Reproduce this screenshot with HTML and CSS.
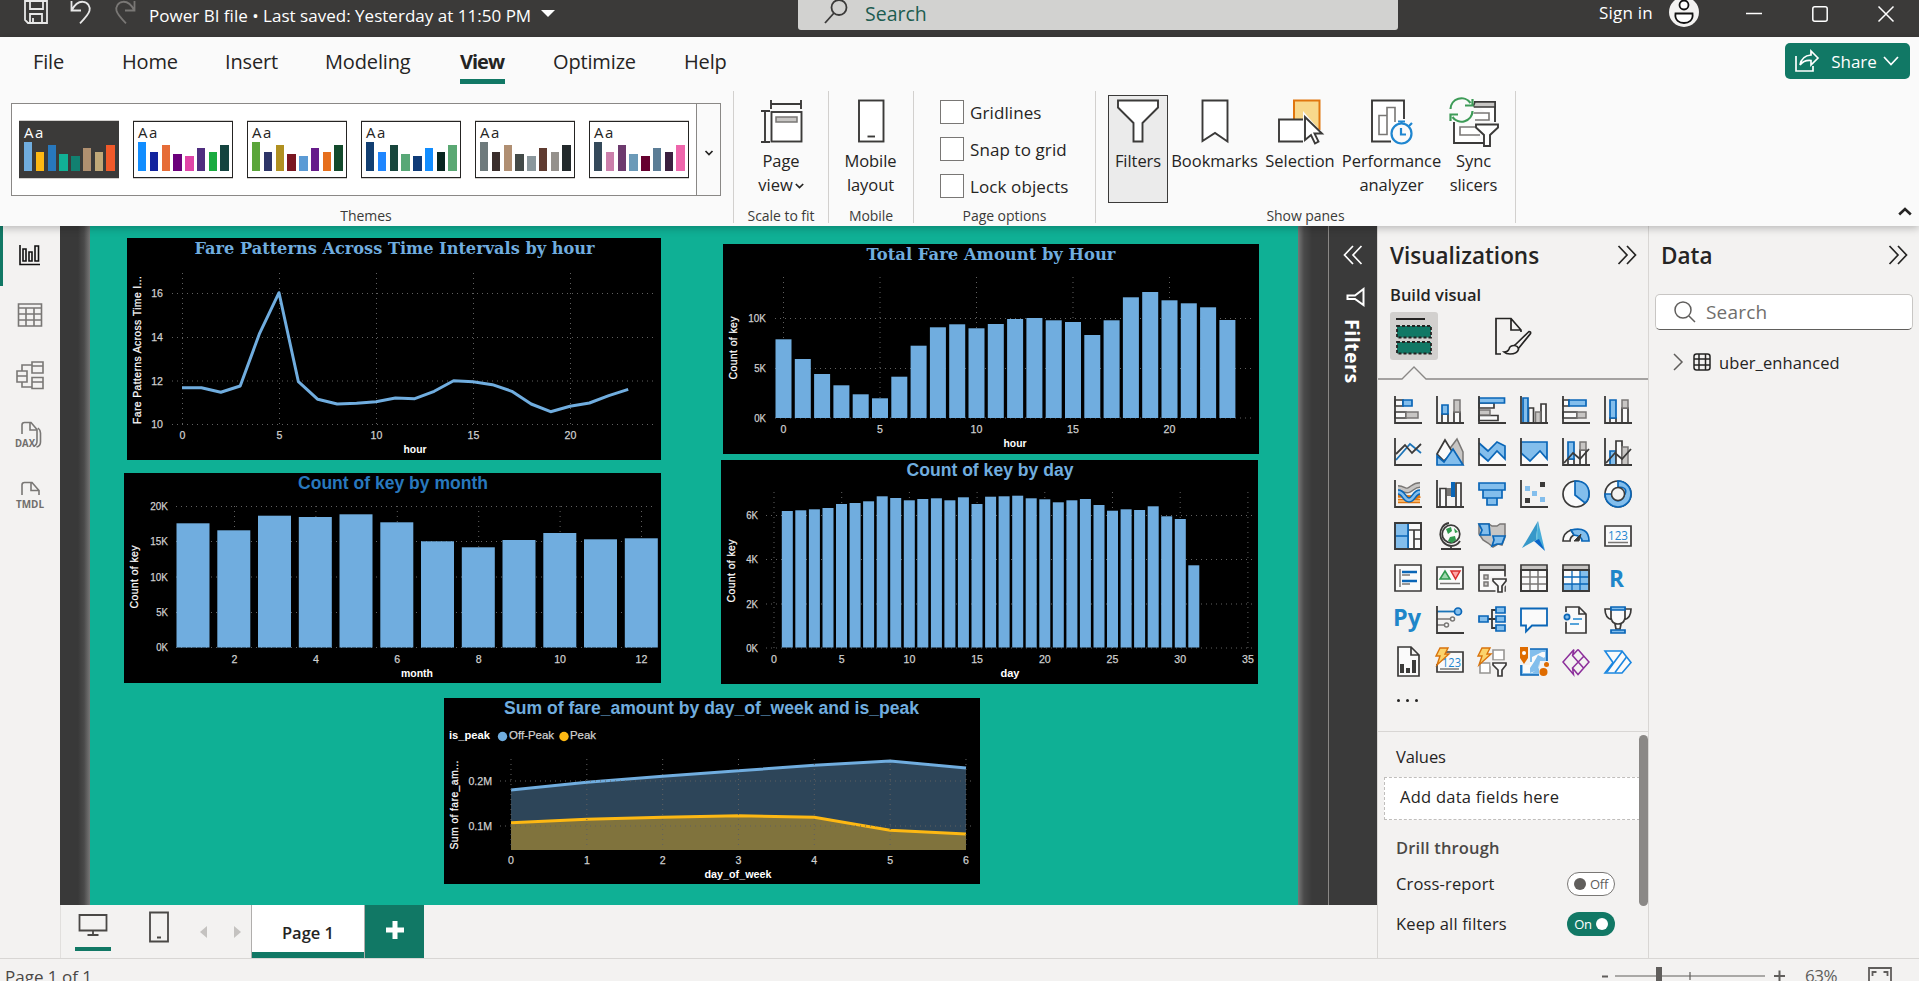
FILE: index.html
```html
<!DOCTYPE html>
<html lang="en">
<head>
<meta charset="utf-8">
<title>Power BI file</title>
<link rel="stylesheet" href="styles.css">
</head>
<body>
<div class="app">
  <header class="titlebar">
    <div class="tb-left">
      <svg class="ic-save" width="24" height="24" viewBox="0 0 24 24"><path d="M1 1h22v22H4l-3-3zM6 1v8h13V1M6 23v-9h12v9M9 23v-5"/></svg>
      <svg class="ic-undo" width="22" height="24" viewBox="0 0 22 24"><path d="M1.500 1v9.500h9.500M1.500 10.500C5 4 9 1.500 13 1.800c5 .4 7.500 5 6.500 9-.8 3-5 8-9.500 12.500"/></svg>
      <svg class="ic-redo" width="22" height="24" viewBox="0 0 22 24"><path d="M20.500 1v9.500H11M20.500 10.500C17 4 13 1.500 9 1.800c-5 .4-7.500 5-6.500 9 .8 3 5 8 9.500 12.500"/></svg>
      <span class="tb-name">Power BI file • Last saved: Yesterday at 11:50 PM</span>
      <svg class="ic-tri" width="14" height="7" viewBox="0 0 14 7"><path d="M0 0h14L7 7z"/></svg>
    </div>
    <div class="tb-search">
      <svg width="24" height="25" viewBox="0 0 24 25"><circle cx="15" cy="8.500" r="7.500"/><path d="M10 14L1 24"/></svg>
      <span>Search</span>
    </div>
    <div class="tb-right">
      <span class="signin">Sign in</span>
      <svg class="avatar" width="30" height="30" viewBox="0 0 30 30"><circle class="disc" cx="15" cy="15" r="15"/><circle cx="15" cy="8" r="4.500"/><path d="M6.500 16.500h17c1 7-4 9.500-8.500 9.500s-9.500-2.500-8.500-9.500z"/></svg>
      <svg class="win" width="16" height="16" viewBox="0 0 16 16"><path d="M0 7.500h16"/></svg>
      <svg class="win" width="16" height="16" viewBox="0 0 16 16"><rect x=".8" y=".8" width="14.400" height="14.400" rx="2"/></svg>
      <svg class="win" width="16" height="16" viewBox="0 0 16 16"><path d="M.5.5l15 15M15.500.5l-15 15"/></svg>
    </div>
  </header>

  <section class="ribbon">
    <nav class="tabs">
      <span class="tab t-file">File</span><span class="tab t-home">Home</span><span class="tab t-insert">Insert</span><span class="tab t-model">Modeling</span><span class="tab t-view">View</span><span class="tab t-opt">Optimize</span><span class="tab t-help">Help</span>
      <button class="share">
        <svg width="24" height="22" viewBox="0 0 24 22"><path d="M1 6v15h17v-5M23 8l-7-7v4C10 5.500 6 9 5 15c3-4 6-5 11-4.500V15z"/></svg>
        <span>Share</span>
        <svg width="16" height="10" viewBox="0 0 16 10"><path d="M1 1l7 7.500L15 1"/></svg>
      </button>
    </nav>
    <div class="groups">
      <div class="group g-themes">
        <div class="gallery"><div class="thumbs" id="thumbs"></div><div class="more"><svg width="8" height="6" viewBox="0 0 8 6"><path d="M.5 1L4 4.500 7.500 1"/></svg></div></div>
        <div class="glabel">Themes</div>
      </div>
      <div class="group g-scale">
        <div class="cmd">
          <svg width="44" height="44" viewBox="0 0 44 44"><g class="dk"><path d="M12 1v9M42 1v9M12 5h30M2 12h9M2 43h9M6 12v31"/><rect x="12.500" y="13" width="30" height="29.500" fill="#fff"/></g><rect x="17" y="18" width="21" height="5" fill="#c8c6c4" stroke="#797775" stroke-width="1.500"/></svg>
          <span>Page<br>view<svg class="dd" width="9" height="6" viewBox="0 0 9 6"><path d="M.8 1l3.700 3.600L8.200 1"/></svg></span>
        </div>
        <div class="glabel">Scale to fit</div>
      </div>
      <div class="group g-mobile">
        <div class="cmd">
          <svg width="44" height="44" viewBox="0 0 44 44"><g class="dk"><rect x="10" y="1.500" width="24.500" height="41" fill="#fff"/><path d="M18.500 37.500h7.500"/></g></svg>
          <span>Mobile<br>layout</span>
        </div>
        <div class="glabel">Mobile</div>
      </div>
      <div class="group g-opts">
        <div class="checks">
          <label><i></i>Gridlines</label><label><i></i>Snap to grid</label><label><i></i>Lock objects</label>
        </div>
        <div class="glabel">Page options</div>
      </div>
      <div class="group g-panes">
        <div class="row">
          <div class="cmd c-filters">
            <svg width="44" height="44" viewBox="0 0 44 44"><path class="dk" fill="#fff" d="M2 1.500h40v7L26.500 24v18.500h-9V24L2 8.500z"/></svg>
            <span>Filters</span>
          </div>
          <div class="cmd c-book">
            <svg width="44" height="44" viewBox="0 0 44 44"><path class="dk" fill="#fff" d="M9.500 1.500h25v41L22 34 9.500 42z"/></svg>
            <span>Bookmarks</span>
          </div>
          <div class="cmd c-sel">
            <svg width="44" height="46" viewBox="0 0 44 46"><path d="M16 1.500h25.500V30H16z" fill="#f8d88c" stroke="#e0760f" stroke-width="2"/><path class="dk" fill="#fff" d="M1 20.500h25v22H1z"/><path d="M25 12v34l7-6 3 6h8l-3-11h5z" fill="#fafafa"/><path class="dk" fill="#fff" d="M27 18v23l6-5 4 8.500 3.500-2-4-8h7.500z"/></svg>
            <span>Selection</span>
          </div>
          <div class="cmd c-perf">
            <svg width="44" height="46" viewBox="0 0 44 46"><path class="dk" fill="#fff" d="M34 20V1.500H2v41h19"/><path d="M17 35.500V8.500h8V23M9 16.500h8v19H9z" fill="#fff" stroke="#797775" stroke-width="1.600"/><g fill="#fafafa" stroke="#1f86d0" stroke-width="2.200"><circle cx="31.500" cy="34.500" r="10"/><path d="M28 22.500h7M31.500 23v2M31 29v6.500h5M39 27l3-3"/></g></svg>
            <span>Performance<br>analyzer</span>
          </div>
          <div class="cmd c-sync">
            <svg width="50" height="50" viewBox="0 0 50 50"><path class="dk" fill="#fff" d="M5 26v21h30M25 6h21v20"/><path d="M26 6h20v5H24z" fill="#c8c6c4" stroke="#3b3a39" stroke-width="1.600"/><path d="M23 17h17v7H26M26 31H11v8h20" fill="#fff" stroke="#797775" stroke-width="1.600"/><circle cx="12.500" cy="14" r="12.500" fill="#fafafa"/><path d="M1.500 13a11 11 0 0 1 20-6M23.500 3v6.500H16M23.500 15a11 11 0 0 1-20 6M1.500 25v-6.500H9" fill="none" stroke="#3d9b57" stroke-width="2.200"/><path class="dk" fill="#fff" d="M27 28.500h22v3l-8 7.500v11h-6V39l-8-7.500z"/></svg>
            <span>Sync<br>slicers</span>
          </div>
        </div>
        <div class="glabel">Show panes</div>
      </div>
      <svg class="collapse" width="14" height="9" viewBox="0 0 14 9"><path d="M1.200 7.500L7 2l5.800 5.500"/></svg>
    </div>
  </section>

  <main class="body">
    <aside class="rail">
      <span class="view on"><svg width="24" height="24" viewBox="0 0 24 24" stroke="#111" stroke-width="1.800"><path d="M2 2v19.500h20M5 6h3v12H5zM11 9h3v9h-3zM17 3h3.500v15H17z"/></svg></span>
      <span class="view"><svg width="26" height="26" viewBox="0 0 26 26"><path d="M1.500 2h23v22h-23zM1.500 6h23M1.500 12h23M1.500 18h23M9 6v18M17 6v18"/></svg></span>
      <span class="view"><svg width="30" height="30" viewBox="0 0 30 30"><path d="M2 11h10v11H2zM2 16h10M17 2h11v11H17zM17 6h11M17 17.500h11v11H17zM17 22h11M7 11V5h10M7 22v5h10"/></svg></span>
      <span class="view"><svg width="30" height="28" viewBox="0 0 30 28"><path d="M7 13V4q0-2.500 2.500-2.500H16l6 7V20q0 4-3 5M15 2v7h7M23 7q2.500 2 2.500 5v9q0 4-4 5"/><text x="0" y="26" textLength="20" lengthAdjust="spacingAndGlyphs">DAX</text></svg></span>
      <span class="view"><svg width="30" height="28" viewBox="0 0 30 28"><path d="M7 14V4q0-2.500 2.500-2.500H17l7 8V14M16 2v7.500h8"/><text x="1" y="26.500" textLength="28" lengthAdjust="spacingAndGlyphs">TMDL</text></svg></span>
    </aside>

    <div class="center">
      <div class="stage">
        <div class="page">
          <svg class="chart c1" id="c1" width="534" height="222"></svg>
          <svg class="chart c2" id="c2" width="536" height="210"></svg>
          <svg class="chart c3" id="c3" width="537" height="210"></svg>
          <svg class="chart c4" id="c4" width="537" height="224"></svg>
          <svg class="chart c5" id="c5" width="536" height="186"></svg>
        </div>
        <div class="filters">
          <svg width="20" height="20" viewBox="0 0 20 20"><path d="M10 1L1.500 10l8.500 9M18.500 1L10 10l8.500 9"/></svg>
          <svg class="fun" width="19" height="18" viewBox="0 0 19 18"><path d="M17.500 1v16L9 11H1.500V7.500H9z"/></svg>
          <span>Filters</span>
        </div>
      </div>
      <div class="pagebar">
        <span class="dev on"><svg width="30" height="24" viewBox="0 0 30 24"><path d="M1.500 2h27v15.500h-27zM15 18v4M9.500 22h11"/></svg></span>
        <span class="dev ph"><svg width="20" height="32" viewBox="0 0 20 32"><path d="M1 1.500h18v29H1zM8 26.500h4"/></svg></span>
        <svg class="arr a1" width="7" height="12" viewBox="0 0 7 12"><path d="M7 0v12L0 6z"/></svg>
        <svg class="arr a2" width="7" height="12" viewBox="0 0 7 12"><path d="M0 0v12l7-6z"/></svg>
        <span class="ptab">Page 1</span>
        <span class="padd"><svg width="18" height="18" viewBox="0 0 18 18"><path d="M9 0v18M0 9h18"/></svg></span>
      </div>
    </div>

    <aside class="vis">
      <div class="phead"><h2>Visualizations</h2><svg width="20" height="20" viewBox="0 0 20 20"><path d="M1.500 1l8.500 9-8.500 9M10 1l8.500 9-8.500 9"/></svg></div>
      <h3>Build visual</h3>
      <div class="modes">
        <span class="mode on"><svg width="36" height="38" viewBox="0 0 36 38"><path d="M0 2h29" stroke="#252423" stroke-width="2"/><g fill="#117865" stroke="#252423" stroke-width="1.800" stroke-dasharray="3 2"><rect x="1" y="9" width="34" height="11.500"/><rect x="1" y="25" width="34" height="11.500"/></g></svg></span>
        <span class="mode"><svg width="38" height="38" viewBox="0 0 38 38" fill="none" stroke="#252423" stroke-width="1.700"><path d="M7 37H2V1.500h15l10 11.500v2M17 1.500V13h10M20 29L35 14.500q2 0 1.500 2L24 32M20 28.500q4 0 4.500 4Q23 37 16 37q-4 0-6-2 4 0 5-3 1-3.500 5-3.500z"/></svg></span>
      </div>
      <svg class="notch" width="270" height="14" viewBox="0 0 270 14"><path d="M0 13h24L36 1l12 12h222"/></svg>
      <div class="grid">
        <svg viewBox="0 0 28 28"><path class="w" d="M1 4h8v6H1zM1 16h11v6H1z"/><path class="b" d="M9 4h9v6H9z"/><path class="g" d="M12 16h12v6H12z"/><path class="a" d="M1 0v27h27"/></svg>
        <svg viewBox="0 0 28 28"><path class="w" d="M6 18h6v9H6zM18 16h6v11h-6z"/><path class="b" d="M6 9h6v9H6z"/><path class="g" d="M18 4h6v12h-6z"/><path class="a" d="M1 0v27h27"/></svg>
        <svg viewBox="0 0 28 28"><path class="w" d="M1 7h15v5H1zM1 19.500h19v5H1z"/><path class="g" d="M1 14h11v5H1z"/><path class="b" d="M1 2h25.500v5H1z"/><path class="a" d="M1 0v27h27"/></svg>
        <svg viewBox="0 0 28 28"><path class="w" d="M8.500 12h5v15h-5zM21 8h5v19h-5z"/><path class="g" d="M15.500 16h5v11h-5z"/><path class="b" d="M3 2h5v25H3z"/><path class="a" d="M1 0v27h27"/></svg>
        <svg viewBox="0 0 28 28"><path class="w" d="M1 4h6v6H1zM1 16h14v6H1z"/><path class="b" d="M7 4h17v6H7z"/><path class="g" d="M15 16h9v6h-9z"/><path class="a" d="M1 0v27h27"/></svg>
        <svg viewBox="0 0 28 28"><path class="w" d="M6 22h6v5H6zM18 12h6v15h-6z"/><path class="b" d="M6 4h6v18H6z"/><path class="g" d="M18 4h6v8h-6z"/><path class="a" d="M1 0v27h27"/></svg>

        <svg viewBox="0 0 28 28"><path d="M2 22L16 6l11 9" class="bl"/><path class="kl" d="M2 16l9-9 7 8 9-9"/><path class="a" d="M1 0v27h27"/></svg>
        <svg viewBox="0 0 28 28"><path class="g" d="M12 13l9-12 6 13v12z"/><path class="w" d="M1 16L9 2l8 13-9 8z"/><path class="b" d="M1 18l7 6 9-13 10 16H1z"/></svg>
        <svg viewBox="0 0 28 28"><path fill="#fafafa" d="M2 19l8 4 9-8 9 8v4H2z"/><path class="b" stroke="none" d="M1 5l9 8 9-9 8 4v13l-8-8-9 10-9-8"/><path class="a" d="M1 0v27h27"/></svg>
        <svg viewBox="0 0 28 28"><path fill="#fafafa" d="M2 15h26v12H2z"/><path class="b" d="M1 4h26v17l-7-8-10 10-9-8z"/><path class="a" d="M1 0v27h27"/></svg>
        <svg viewBox="0 0 28 28"><path class="w" d="M6 21h6v6H6zM18 12h6v15h-6z"/><path class="b" d="M6 4h6v17H6z"/><path class="g" d="M18 4h6v8h-6z"/><path class="kl" d="M2 25l9-10 7 6 9-10"/><path class="a" d="M1 0v27h27"/></svg>
        <svg viewBox="0 0 28 28"><path class="b" d="M6 13h6v14H6z"/><path class="w" d="M12 3h6v24h-6z"/><path class="g" d="M18 9h6v18h-6z"/><path class="kl" d="M2 25l9-10 7 6 9-10"/><path class="a" d="M1 0v27h27"/></svg>

        <svg viewBox="0 0 28 28"><path d="M4 15.500h5q5 4 17 0M4 21h22" stroke="#e0760f" stroke-width="4.500" fill="none"/><path d="M4 21h22" stroke="#fbc987" stroke-width="1.500"/><path d="M4 8c6 0 7 4 11 2s5-5 11-5" stroke="#797775" stroke-width="6" fill="none"/><path d="M4 8c6 0 7 4 11 2s5-5 11-5" stroke="#c8c6c4" stroke-width="3.200" fill="none"/><path d="M4 12c6 0 6 8 11 8s5-8 11-8" stroke="#0a66b7" stroke-width="5.500" fill="none"/><path d="M4 12c6 0 6 8 11 8s5-8 11-8" stroke="#83beec" stroke-width="2.400" fill="none"/><path class="a" d="M1 0v27h27"/></svg>
        <svg viewBox="0 0 28 28"><path class="w" d="M4 8.500h6V27H4zM20 3h5v24h-5z"/><path fill="#797775" d="M11 8h4v8h-4z"/><path fill="#0a66b7" d="M15 2h4v15h-4z"/><path class="a" d="M1 0v27h27"/></svg>
        <svg viewBox="0 0 28 28"><path class="b" d="M1 3h26v7H1zM5 10h19v8H5zM9 18h10v7H9z"/></svg>
        <svg viewBox="0 0 28 28"><path fill="#83beec" d="M5 6h5v5H5zM12 11h5v5h-5zM20 17h5v5h-5z"/><path fill="#3b3a39" d="M20 2h5v5h-5zM5 18h5v5H5z"/><path class="a" d="M1 0v27h27"/></svg>
        <svg viewBox="0 0 28 28"><circle class="w" cx="14" cy="14" r="13"/><path class="b" d="M13 1q14 0 14 13 0 6-4 9L13 15z"/></svg>
        <svg viewBox="0 0 28 28"><circle class="w" cx="14" cy="14" r="13"/><path class="b" d="M14 1a13 13 0 1 1-13 13h6q3 7 7 7t7-7-7-7z"/><circle cx="14" cy="14" r="6.500" fill="#f3f2f1" stroke="#3b3a39" stroke-width="1.500"/></svg>

        <svg viewBox="0 0 28 28"><path class="w" d="M14 1h13v26H14zM14 8h13M20 8v19M20 17h7"/><path class="b" d="M1 1h13v26H1zM1 14h13"/><path class="kl" d="M1 1h26v26H1z"/></svg>
        <svg viewBox="0 0 28 28"><circle class="w" cx="15" cy="12" r="8.800"/><path fill="#2f9a4d" d="M10 7l5-2 1 4-4 3zM18 6l4 4-3 1zM14 15l5-1 1 4-4 3-4-2z"/><path class="kl" d="M13 1C1 3 1 22 15 24q6 0 9-5M15 24v3M5 27h20"/></svg>
        <svg viewBox="0 0 28 28"><path class="g" stroke="#3b3a39" d="M1 2h10l3 2h5l3-2h5v13l-3 8-4-1-5 3-5-4-5-3-4-6z"/><path class="b" d="M1 2h10l1 11H2l2-5zM15 14h12l-3 8h-5l-5 2 2-6z"/></svg>
        <svg viewBox="0 0 28 28"><path fill="#3698c9" d="M18-1L2 26l14-8z"/><path fill="#58bbdc" d="M18-1l-2 19 4 1z"/><path fill="#48add8" d="M18-1l7 30-7-11z"/><path fill="#0a66c8" d="M14 19l5-2 6 12z"/></svg>
        <svg viewBox="0 0 28 28"><path class="w" d="M1 19q0-8 8-11l3 5q-4 2-4 6z"/><path class="b" d="M9 8q18-4 18 11h-7q0-5-8-6z"/><path d="M12 19l7-7-2 7z" fill="#3b3a39" stroke="#3b3a39"/></svg>
        <svg viewBox="0 0 28 28"><path class="w" d="M1 4h26v20H1z"/><path d="M4 20.500h20" stroke="#797775" stroke-width="1.500"/><text class="n" x="4" y="18" textLength="20" lengthAdjust="spacingAndGlyphs">123</text></svg>

        <svg viewBox="0 0 28 28"><path class="w" d="M1 1h26v26H1z"/><path d="M6 5v18M8 11h8M8 20h8" stroke="#797775" stroke-width="1.500"/><path d="M8 8h15M8 17h15" stroke="#0a66b7" stroke-width="2.400"/></svg>
        <svg viewBox="0 0 28 28"><path class="w" d="M1 3h26v22H1z"/><path d="M4 15l5-8 5 8z" fill="#9fd7ae" stroke="#2f9a4d" stroke-width="1.500"/><path d="M15 7h9l-4.500 8z" fill="#ffa5a5" stroke="#d92c2c" stroke-width="1.500"/><path d="M4 19.500h20" stroke="#797775" stroke-width="1.500"/></svg>
        <svg viewBox="0 0 28 28"><path class="w" d="M1 1h26v26H1z"/><path class="g" d="M6 11h4v4H6zM6 18h4v4H6z"/><path d="M2 2h24v4H2z" fill="#c8c6c4"/><path class="kl" d="M1 6h26"/><path class="w halo" d="M15 15h13v2l-4 5v6h-4v-6l-5-5z"/><path class="w" d="M15 15h13v2l-4 5v6h-4v-6l-5-5z"/></svg>
        <svg viewBox="0 0 28 28"><path class="w" d="M1 1h26v26H1z"/><path d="M2 2h24v4H2z" fill="#c8c6c4"/><path d="M1 13h26M1 20h26M10 6v21M18 6v21" stroke="#797775" stroke-width="1.500"/><path class="kl" d="M1 6h26v21H1z"/></svg>
        <svg viewBox="0 0 28 28"><path class="w" d="M1 1h26v26H1z"/><path d="M2 2h24v4H2z" fill="#c8c6c4"/><path d="M18 6h9v21H1v-7h17z" fill="#83beec"/><path d="M1 13h26M1 20h26M10 6v21M18 6v21" stroke="#0a66b7" stroke-width="1.300"/><path class="kl" d="M1 6h26v21H1z"/></svg>
        <svg viewBox="0 0 28 28"><text class="lt" x="5" y="23" textLength="15" lengthAdjust="spacingAndGlyphs">R</text></svg>

        <svg viewBox="0 0 28 28"><text class="lt" x="-1" y="20" textLength="28" lengthAdjust="spacingAndGlyphs">Py</text></svg>
        <svg viewBox="0 0 28 28"><path d="M1 13h14M1 19h8" stroke="#797775" stroke-width="1.500"/><path class="bl" d="M1 5.500h18"/><circle class="b" cx="22" cy="5.500" r="3.500"/><circle cx="16.500" cy="13" r="2" fill="#fff" stroke="#797775" stroke-width="1.500"/><circle cx="10.500" cy="19" r="2" fill="#fff" stroke="#797775" stroke-width="1.500"/><path class="a" d="M1 0v27h27"/></svg>
        <svg viewBox="0 0 28 28"><path class="kl" d="M10 13h8M18 4h-4v18h4"/><path class="b" d="M1 10h9v6H1zM18 1h9v6h-9zM18 10h9v6h-9zM18 19h9v6h-9z"/></svg>
        <svg viewBox="0 0 28 28"><path d="M1 2.500h26v17H12l-6 6v-6H1z" fill="#fafafa" stroke="#0a66b7" stroke-width="1.800"/></svg>
        <svg viewBox="0 0 28 28"><path class="w" d="M4 1h13l7 7v19H4zM17 1v7h7"/><path d="M11 13h9M8 18h9" stroke="#1f86d0" stroke-width="1.500"/><circle cx="4" cy="11" r="5" fill="#f3f2f1"/><circle class="b" cx="5" cy="11" r="2.600"/></svg>
        <svg viewBox="0 0 28 28"><path class="w" d="M7 2h14v10q-1 6-7 6t-7-6zM7 3H1q0 9 7 11M21 3h6q0 9-7 11M11 18h6l-1 5h-4z"/><path class="b" d="M7 1h14v3H7zM7 24h14v3H7z"/></svg>

        <svg viewBox="0 0 28 28"><path class="w" d="M4-1h13l8 8v21H4zM17-1v8h8"/><path fill="#3b3a39" d="M6 16h4v9H6zM12 20h4v5h-4zM18 12h4v13h-4z"/></svg>
        <svg viewBox="0 0 28 28"><path class="w" d="M10 4h17v20H1V16"/><path d="M4 21h19" stroke="#797775" stroke-width="1.500"/><text class="n" x="6" y="19" textLength="19" lengthAdjust="spacingAndGlyphs">123</text><path class="o" d="M4 0h8L9 6h4L1 17l3-9H0z"/></svg>
        <svg viewBox="0 0 28 28"><path d="M15 2h11v10H15zM2 15h10v10H2z" fill="#fff" stroke="#979593" stroke-width="1.600"/><path class="o" d="M4 0h8L9 6h4L1 17l3-9H0z"/><path class="w halo" d="M15 15h13v2l-4 5v6h-4v-6l-5-5z"/><path class="w" d="M15 15h13v2l-4 5v6h-4v-6l-5-5z"/></svg>
        <svg viewBox="0 0 28 28"><path class="b" d="M1 1h26v26H1z"/><path fill="#fafafa" d="M3 14h9v-5l10-5h3v5l-6 4v7l-7 5H3z"/><path fill="#83beec" d="M18 7l6 3-5 6-1 6-8 3v-5l4-6z"/><path fill="#f3f2f1" d="M20 13h8v15h-9v-9zM-1-1h11v18h-11z"/><circle cx="23.500" cy="24" r="4" fill="#df6c00"/><circle cx="26.500" cy="16.500" r="2.500" fill="#df6c00"/><path d="M0-1h8v11l-4 6-4-6z" fill="#df6c00"/><circle cx="4" cy="5" r="2" fill="#fff"/></svg>
        <svg viewBox="0 0 28 28"><path d="M12 1.500L1 14l10.500 12.500L10.500 20M16 1.500L27 14 16 26.500 10.500 20 22 8M12 1.500l-1.500 6L22 20.500M16 1.500l-5.500 6" fill="none" stroke="#8c2f9b" stroke-width="1.500"/></svg>
        <svg viewBox="0 0 28 28"><path d="M1 3h17l9 11.500L18 25H1l8-10.500z" fill="#fafafa" stroke="#1a86e0" stroke-width="1.600"/><path d="M3 24L18.500 3M11 24.500L22.500 9" fill="none" stroke="#1a86e0" stroke-width="1.600"/></svg>
      </div>
      <div class="dots"><i></i><i></i><i></i></div>
      <div class="wells">
        <div class="wellbody">
          <p class="wl">Values</p>
          <div class="drop">Add data fields here</div>
          <p class="wl drill">Drill through</p>
          <div class="sw"><span class="s1">Cross-report</span><b class="toggle off"><i></i>Off</b></div>
          <div class="sw"><span class="s2">Keep all filters</span><b class="toggle onn">On<i></i></b></div>
        </div>
        <div class="scroll"></div>
      </div>
    </aside>

    <aside class="data">
      <div class="phead"><h2>Data</h2><svg width="20" height="20" viewBox="0 0 20 20"><path d="M1.500 1l8.500 9-8.500 9M10 1l8.500 9-8.500 9"/></svg></div>
      <div class="dsearch"><svg width="22" height="22" viewBox="0 0 22 22"><circle cx="9" cy="9" r="8"/><path d="M15 15l6 6"/></svg><span>Search</span></div>
      <div class="trow">
        <svg width="10" height="18" viewBox="0 0 10 18"><path d="M1 1l8 8-8 8"/></svg>
        <svg class="tbl" width="18" height="18" viewBox="0 0 18 18"><rect x="1" y="1" width="16" height="16" rx="2.500"/><path d="M1 6h16M1 12h16M6 1v16M12.500 1v16"/></svg>
        <span>uber_enhanced</span>
      </div>
    </aside>
  </main>

  <footer class="status">
    <span class="pages">Page 1 of 1</span>
    <div class="zoom">
      <svg class="slider" width="184" height="24" viewBox="0 0 184 24"><path d="M0 10.500h6" stroke-width="2"/><path d="M13 10h150M88 6v8"/><path d="M54 1h6v20h-6z" fill="#605e5c" stroke="none"/><path d="M172 10h11M177.500 4.500v11" stroke-width="2"/></svg>
      <span>63%</span>
      <svg class="fit" width="24" height="20" viewBox="0 0 24 20"><path d="M1 20V1h22v19M4.500 9V5h4M15.500 5h4v4M4.500 15v4h4M15.500 19h4v-4"/></svg>
    </div>
  </footer>
</div>
<script src="charts.js"></script>
</body>
</html>
```
FILE: styles.css
```css
* { box-sizing: border-box; }
html, body { margin: 0; height: 100%; overflow: hidden; }
body { font-family: "Open Sans", "Noto Sans", sans-serif; font-size: 17px; color: #252423; background: #f3f2f1; }
svg { display: block; flex: none; overflow: visible; }
span, label, h2, h3, button { white-space: nowrap; }
.app { display: flex; flex-direction: column; width: 1919px; height: 981px; overflow: hidden; }

.titlebar { height: 37px; flex: none; display: flex; align-items: flex-start; background: #3b3a39; color: #fff; }
.tb-left { width: 798px; display: flex; padding-left: 24px; }
.tb-left path { fill: none; stroke: #e8e8e8; stroke-width: 1.800; }
.ic-undo { margin-left: 22px; }
.ic-redo { margin-left: 22px; }
.tb-left .ic-redo path { stroke: #797775; }
.tb-name { margin: 4px 0 0 13px; width: 392px; line-height: 23px; font-size: 17px; letter-spacing: .02px; }
.ic-tri { margin-top: 10px; }
.tb-left .ic-tri path { fill: #fff; stroke: none; }
.tb-search { width: 600px; height: 30px; background: #d2d2d0; border-radius: 0 0 3px 3px; display: flex; padding-left: 26px; color: #1d5c50; font-size: 19.500px; }
.tb-search svg { fill: none; stroke: #3b3a39; stroke-width: 1.800; margin-top: -1px; }
.tb-search span { margin-left: 17px; line-height: 27px; letter-spacing: 0; }
.tb-right { display: flex; padding-left: 201px; }
.signin { width: 70px; line-height: 26px; font-size: 17px; letter-spacing: .2px; }
.avatar { margin-top: -3px; fill: #fff; stroke: #111; stroke-width: 1.800; }
.avatar .disc { stroke: none; fill: #f3f2f1; }
.win { margin: 6px 0 0 50px; fill: none; stroke: #fff; stroke-width: 1.500; }
.avatar + .win { margin-left: 47px; }

.ribbon { height: 189px; flex: none; background: #fafafa; box-shadow: 0 2px 8px rgba(0,0,0,.25); position: relative; z-index: 2; }
.tabs { height: 54px; display: flex; gap: 48px; padding-left: 33px; font-size: 20px; align-items: flex-start; letter-spacing: -.15px; }
.tab { height: 47px; line-height: 49px; }
.t-file { width: 41px; } .t-home { width: 55px; } .t-insert { width: 52px; } .t-model { width: 87px; }
.t-view { width: 45px; font-weight: 700; border-bottom: 5px solid #117865; letter-spacing: -1px; }
.t-opt { width: 83px; } .t-help { width: 42px; }
.share { margin: 6px 9px 0 auto; width: 125px; height: 36px; border: 0; border-radius: 5px; background: #117865; color: #fff; font: 17px "Open Sans", sans-serif; letter-spacing: -.3px; display: flex; align-items: center; padding: 0 0 0 10px; }
.share svg { fill: none; stroke: #fff; stroke-width: 1.700; }
.share span { margin: 0 6px 0 12px; width: 46px; letter-spacing: 0; }
.groups { display: flex; height: 132px; }
.group { display: flex; flex-direction: column; border-right: 1px solid #d2d0ce; }
.group > :first-child { height: 112px; }
.glabel { text-align: center; font-size: 14px; line-height: 26px; height: 20px; color: #3b3a39; letter-spacing: -.05px; }
.g-themes { width: 734px; padding-left: 11px; }
.g-themes .glabel { width: 710px; }
.g-themes > .gallery { width: 710px; height: 93px; margin: 12px 0 7px; border: 1px solid #8a8886; background: #fff; display: flex; }
.thumbs { width: 685px; display: flex; gap: 14px; padding: 17px 0 0 7px; }
.thumb { width: 100px; height: 57px; border: 1px solid #252423; background: #fff; padding: 2px 3px 0 4px; display: flex; flex-direction: column; box-shadow: 0 1px 0 #d2d0ce, 0 -1px 0 #d2d0ce; }
.thumb.dark { background: #3b3a39; border-color: #3b3a39; color: #fff; }
.thumb b { font: 15px/16px "Open Sans", sans-serif; letter-spacing: 1.500px; }
.tbars { height: 30px; margin-top: 1px; display: flex; gap: 3.300px; align-items: flex-end; }
.tbars i { width: 8.500px; }
.more { width: 24px; border-left: 1px solid #8a8886; background: #fafafa; display: flex; align-items: center; justify-content: center; padding-top: 6px; }
.more path, .dd path, .collapse path { fill: none; stroke: #252423; stroke-width: 1.700; }
.g-scale { width: 95px; } .g-mobile { width: 85px; } .g-opts { width: 182px; } .g-panes { width: 420px; }
.cmd { display: flex; flex-direction: column; align-items: center; padding-top: 8px; text-align: center; line-height: 24px; font-size: 16.500px; letter-spacing: -.05px; }
.g-mobile .cmd { padding-right: 1px; }
.cmd span { margin-top: 6px; }
.cmd > svg { margin: 0; }
.dk { stroke: #3b3a39; stroke-width: 1.900; fill: none; }
path.dk[fill] { fill: #fff; }
.dd { display: inline-block; margin: 0 0 2px 2px; }
.checks { padding: 9px 0 0 26px; display: flex; flex-direction: column; gap: 13px; }
.checks label { display: flex; align-items: center; height: 24px; font-size: 17px; letter-spacing: .1px; }
.checks i { width: 24px; height: 24px; border: 1px solid #797775; background: #fff; margin-right: 6px; }
.row { display: flex; padding-left: 12px; }
.c-filters { width: 60px; height: 108px; margin-top: 4px; padding-top: 4px; background: #ebebeb; border: 1px solid #3b3a39; padding-top: 3px; }
.c-book { width: 93px; } .c-sel { width: 78px; } .c-perf { width: 105px; } .c-sync { width: 59px; }
.c-sel span, .c-perf span { margin-top: 4px; }
.c-sync { padding-top: 5px; } .c-sync span { margin-top: 3px; }
.collapse { margin: 116px 0 0 auto; margin-right: 7px; }
.collapse path { stroke-width: 2.600; }

.body { display: flex; height: 733px; flex: none; border-bottom: 1px solid #d8d6d4; }
.rail { width: 60px; flex: none; display: flex; flex-direction: column; }
.view { height: 60px; display: flex; align-items: center; justify-content: center; }
.view.on { border-left: 3px solid #117865; height: 60px; padding: 0 4px 0 0; }
.view + .view { height: 60px; }
.view svg { fill: none; stroke: #797775; stroke-width: 1.600; margin-top: -2px; }
.view.on svg { stroke: #111; margin-top: -2px; }
.view text { font: 700 10.500px "Open Sans", sans-serif; fill: #706e6c; stroke: none; }
.center { width: 1317px; flex: none; }
.stage { height: 679px; display: flex; background: #3a3a3a; padding-left: 30px; position: relative; background-image: linear-gradient(90deg, #393939 18px, #4a4a4a 24px, #777 30px, transparent 30px), linear-gradient(90deg, transparent 1238px, #777 1238px, #4a4a4a 1244px, #3a3a3a 1252px); }
.page { width: 1208px; position: relative; background: #0fb095; }
.chart { position: absolute; background: #000; }
.c1 { left: 37px; top: 12px; } .c2 { left: 633px; top: 18px; } .c3 { left: 34px; top: 247px; }
.c4 { left: 631px; top: 234px; } .c5 { left: 354px; top: 472px; }
.chart text { font-family: "Liberation Sans", Arial, sans-serif; font-size: 11.500px; fill: #d0d0d0; stroke: #d0d0d0; stroke-width: .25; }
.chart .at { fill: #fff; font-weight: 700; stroke: none; font-size: 11px; }
.chart .yt { fill: #fff; stroke: #fff; stroke-width: .2; font-size: 10.500px; }
.chart .ti { fill: #70addf; font-weight: 700; font-size: 17.500px; stroke: none; }
.chart .ser { font-family: "DejaVu Serif", serif; font-size: 17px; }
.chart .mo { fill: #2878bd; }
.chart .gr { stroke: #606060; stroke-width: 1; stroke-dasharray: 1 4; fill: none; }
.chart .bar { fill: #70addf; }
.filters { width: 49px; margin-left: 30px; border-left: 1px solid #8a8886; background: #3a3a3a; color: #fff; display: flex; flex-direction: column; align-items: center; padding: 19px 0 0 0; }
.filters svg { fill: none; stroke: #fff; stroke-width: 1.700; }
.filters .fun { margin: 23px 0 0 4px; stroke-width: 2; }
.filters span { writing-mode: vertical-rl; font-weight: 700; font-size: 19.500px; line-height: 22px; margin: 13px 2px 0 0; letter-spacing: .5px; }
.pagebar { height: 53px; display: flex; border-left: 1px solid #e1dfdd; }
.dev { width: 36px; height: 46px; margin-left: 14px; display: flex; justify-content: center; padding-top: 8px; }
.dev.on { border-bottom: 4px solid #117865; }
.dev.ph { margin-left: 30px; padding-top: 6px; }
.dev svg { fill: none; stroke: #4a4846; stroke-width: 1.800; }
.arr { fill: #c4c2c0; margin: 21px 0 0 23px; }
.a2 { margin-left: 27px; }
.ptab { margin-left: 10px; width: 114px; background: #fff; border: 1px solid #b0aeac; border-width: 0 1px 0 1px; box-shadow: inset 0 -6px #117865; text-align: center; line-height: 56px; font-weight: 600; font-size: 16.500px; letter-spacing: 0; }
.padd { width: 59px; background: #117865; display: flex; justify-content: center; padding-top: 16px; }
.padd path { stroke: #fff; stroke-width: 5; }

.vis { width: 272px; flex: none; border-left: 1px solid #d8d6d4; border-right: 1px solid #d8d6d4; }
.phead { display: flex; justify-content: space-between; align-items: center; height: 58px; padding: 0 11px 0 12px; }
.phead svg { fill: none; stroke: #252423; stroke-width: 1.700; }
h2 { margin: 0; font-size: 22.500px; font-weight: 600; letter-spacing: 0; }
h3 { margin: 0; font-size: 16.500px; font-weight: 600; line-height: 21px; padding-left: 12px; letter-spacing: 0; }
.modes { display: flex; padding: 7px 0 0 12px; gap: 51px; }
.mode { width: 48px; height: 48px; display: flex; align-items: center; justify-content: center; }
.mode.on { background: #d2d0ce; border-radius: 3px; }
.notch { margin-top: 6px; fill: none; stroke: #8a8886; stroke-width: 1.300; }
.grid { display: grid; grid-template-columns: repeat(6, 28px); gap: 14px; padding: 16px 0 0 16px; }
.grid svg { width: 28px; height: 28px; }
.w { fill: #fafafa; stroke: #3b3a39; stroke-width: 1.700; }
.halo { fill: #f3f2f1; stroke: #f3f2f1; stroke-width: 5; }
.b { fill: #83beec; stroke: #0a66b7; stroke-width: 1.700; }
.g { fill: #c8c6c4; stroke: #797775; stroke-width: 1.500; }
.a, .kl { fill: none; stroke: #3b3a39; stroke-width: 1.800; }
.bl { fill: none; stroke: #1b74b8; stroke-width: 1.800; }
.o { fill: #fbd36b; stroke: #d9730b; stroke-width: 1.400; }
.n { font: 13px "Open Sans", sans-serif; fill: #1f86d0; }
.lt { font: 700 24px "Open Sans", sans-serif; fill: #1f86c9; }
.dots { display: flex; gap: 6px; padding: 23px 0 0 19px; }
.dots i { width: 3px; height: 3px; border-radius: 2px; background: #252423; }
.wells { margin-top: 29px; border-top: 1px solid #d8d6d4; height: 226px; display: flex; align-items: flex-start; }
.wellbody { width: 261px; padding-left: 6px; }
.wl { margin: 0; padding: 14px 0 0 12px; line-height: 22px; height: 45px; font-size: 16.500px; letter-spacing: -.1px; }
.drop { width: 256px; height: 43px; border: 1px dashed #c0bebc; background: #fff; line-height: 37px; padding-left: 15px; font-size: 16.500px; letter-spacing: .25px; }
.wl.drill { padding-top: 17px; height: 51px; font-weight: 600; color: #4a4846; font-size: 16.500px; letter-spacing: .15px; }
.sw { display: flex; justify-content: space-between; align-items: center; height: 24px; margin: 0 24px 16px 12px; font-size: 16.500px; letter-spacing: .15px; }
.toggle { width: 48px; height: 24px; border-radius: 12px; font-weight: 400; font-size: 13px; letter-spacing: -.3px; display: flex; align-items: center; justify-content: center; gap: 4px; margin-top: 1px; }
.toggle i { width: 12px; height: 12px; border-radius: 6px; background: #605e5c; }
.off { border: 1px solid #797775; background: #fff; color: #605e5c; }
.onn { background: #117865; color: #fff; }
.onn i { background: #fff; }
.scroll { width: 9px; height: 171px; margin-top: 3px; border-radius: 5px; background: #8a8886; }

.data { flex: 1; }
.data .phead { padding: 0 11px 0 12px; }
.dsearch { margin: 10px 0 0 6px; width: 258px; height: 36px; border: 1px solid #c8c6c4; border-bottom: 1px solid #605e5c; border-radius: 5px; background: #fff; display: flex; align-items: center; padding-left: 18px; color: #706e6c; font-size: 19px; letter-spacing: .2px; }
.dsearch svg, .trow svg { fill: none; stroke: #605e5c; stroke-width: 1.500; }
.dsearch span { margin-left: 10px; }
.trow { display: flex; align-items: center; height: 24px; margin: 20px 0 0 24px; font-size: 16.500px; letter-spacing: .1px; }
.trow .tbl { margin: 0 8px 0 10px; stroke: #252423; }

.status { height: 22px; display: flex; justify-content: space-between; align-items: flex-start; padding: 7px 27px 0 5px; overflow: hidden; color: #4a4846; font-size: 17px; line-height: 22px; }
.zoom { display: flex; }
.slider, .fit { fill: none; stroke: #605e5c; stroke-width: 1.200; }
.zoom span { width: 44px; margin: -1px 19px 0 19px; letter-spacing: -.5px; color: #605e5c; }
.fit { stroke-width: 1.800; margin-top: 1px; }
```
FILE: charts.js
```js
// Theme gallery thumbnails
const themes = [
  ['dark', '#70addf #fdb813 #2878bd #11b095 #118070 #b09070 #c0a878 #f15929'],
  ['', '#118dff #12239e #e66c37 #6b007b #e044a7 #4f2d7f #1aab40 #14443f'],
  ['', '#5ba53a #2d3568 #b09020 #7a1620 #5b9bd5 #661c8a #e66f1c #134a2c'],
  ['', '#123f72 #1f86ff #17453c #58a877 #0f3b78 #118dff #07251f #5aa873'],
  ['', '#6e7a7c #3a2e2c #b08f72 #434a48 #8a979c #5f3b30 #95918c #22292b'],
  ['', '#34495a #cb7fab #6d3a6e #6b9ab8 #66002f #5b7d96 #3b1f3f #ee66ac']
];
const barHeights = [29, 19, 26, 17, 15, 23, 19, 26];
document.getElementById('thumbs').innerHTML = themes.map(([cls, cols]) =>
  `<div class="thumb ${cls}"><b>Aa</b><div class="tbars">` +
  cols.split(' ').map((c, i) => `<i style="height:${barHeights[i]}px;background:${c}"></i>`).join('') +
  '</div></div>').join('');

const text = (x, y, s, cls = '', len = 0, anchor = 'middle') =>
  `<text x="${x}" y="${y}" class="${cls}" text-anchor="${anchor}"${len ? ` textLength="${len}" lengthAdjust="spacingAndGlyphs"` : ''}>${s}</text>`;
const vtext = (x, y, s, len) =>
  `<text class="yt" transform="translate(${x} ${y}) rotate(-90)" text-anchor="middle" textLength="${len}">${s}</text>`;

// Gridlines with tick labels; every position is in the chart's own pixels
function axes(o) {
  let s = '';
  o.yt.forEach(([y, l]) => { s += `<path class="gr" d="M${o.x0} ${y}H${o.x1}"/>` + text(o.lx, y + 3.5, l, '', l.length * 5.9, 'end'); });
  o.xt.forEach(([x, l]) => { s += `<path class="gr" d="M${x} ${o.y0}V${o.y1}"/>` + text(x, o.ly, l, '', String(l).length * 5.9); });
  return s;
}
const ticks = (start, step, n, x, pitch) => Array.from({ length: n }, (_, i) => [x + i * pitch, start + i * step]);
const bars = (tops, x, pitch, w, base) =>
  tops.map((t, i) => `<rect class="bar" x="${(x + i * pitch).toFixed(1)}" y="${t.toFixed(1)}" width="${w}" height="${(base - t).toFixed(1)}"/>`).join('');
const put = (id, s) => { document.getElementById(id).innerHTML = s; };

const fare = [503, 503, 517, 498, 340, 218, 485, 538, 552, 550, 545, 534, 536, 514, 482, 485, 494, 514, 552, 575, 559, 549, 527, 508];
put('c1',
  axes({ x0: 45, x1: 528, y0: 35, y1: 187, lx: 36, ly: 201, yt: [[55.500, '16'], [99.500, '14'], [143, '12'], [186.500, '10']], xt: ticks(0, 5, 5, 55.500, 97) }) +
  `<polyline fill="none" stroke="#70addf" stroke-width="3" stroke-linejoin="round" points="${fare.map((z, i) => (55 + i * 19.400).toFixed(1) + ',' + (z / 3 - 18).toFixed(1)).join(' ')}"/>` +
  text(267.500, 16, 'Fare Patterns Across Time Intervals by hour', 'ti ser', 400) +
  text(288, 215, 'hour', 'at', 23) + vtext(14, 112, 'Fare Patterns Across Time I...', 148));

const byHour = [343, 402, 447, 481, 508, 520, 455, 362, 307, 298, 310, 297, 282, 279, 286, 291, 330, 286, 217, 201, 226, 235, 247, 285];
put('c2',
  axes({ x0: 52, x1: 530, y0: 33, y1: 174, lx: 43, ly: 189, yt: [[74.500, '10K'], [124.500, '5K'], [174, '0K']], xt: ticks(0, 5, 5, 60.500, 96.500) }) +
  bars(byHour.map(z => z / 3 - 19), 52.500, 19.300, 16, 174) +
  text(268, 16, 'Total Fare Amount by Hour', 'ti ser', 249) +
  text(292, 203, 'hour', 'at', 23) + vtext(14, 104, 'Count of key', 63));

const byMonth = [190, 211, 167, 171, 163, 187, 244, 262, 240, 219, 238, 235];
put('c3',
  axes({ x0: 52, x1: 531, y0: 33, y1: 174, lx: 44, ly: 190, yt: [[33.500, '20K'], [68.500, '15K'], [104, '10K'], [139.500, '5K'], [174.500, '0K']], xt: ticks(2, 2, 6, 110.500, 81.400) }) +
  bars(byMonth.map(z => z / 3 - 13), 52.500, 40.750, 33, 174.500) +
  text(269, 16, 'Count of key by month', 'ti mo', 190) +
  text(293, 204, 'month', 'at', 32) + vtext(14, 104, 'Count of key', 63));

const byDay = [168, 166, 163, 159, 147, 144, 139, 124, 129, 136, 132, 130, 136, 127, 147, 125, 124, 122, 130, 133, 142, 136, 132, 150, 167, 163, 165, 154, 184, 192, 331];
put('c4',
  axes({ x0: 45, x1: 534, y0: 32, y1: 188, lx: 37, ly: 203, yt: [[55.500, '6K'], [99.500, '4K'], [144, '2K'], [188, '0K']], xt: ticks(0, 5, 8, 53, 67.700) }) +
  bars(byDay.map(z => z / 3 - 5), 60.800, 13.550, 11, 187.500) +
  text(269, 16, 'Count of key by day', 'ti', 167) +
  text(289, 217, 'day', 'at', 19) + vtext(14, 111, 'Count of key', 63));

const off = [300, 277, 259, 242, 226, 213, 234].map(z => z / 3 - 8);
const peak = [398, 388, 382, 377, 382, 421, 432].map(z => z / 3 - 8);
const pts = a => a.map((y, i) => (67 + i * 75.830).toFixed(1) + ',' + y.toFixed(1)).join(' ');
const area = (a, c, o) =>
  `<polygon fill="${c}" fill-opacity="${o}" points="67,152 ${pts(a)} 522,152"/><polyline fill="none" stroke="${c}" stroke-width="3" points="${pts(a)}"/>`;
put('c5',
  area(off, '#70addf', .4) + area(peak, '#fdb813', .4) +
  axes({ x0: 56, x1: 530, y0: 61, y1: 151, lx: 48, ly: 166, yt: [[83, '0.2M'], [128, '0.1M']], xt: ticks(0, 1, 7, 67, 75.830) }) +
  text(267.500, 16, 'Sum of fare_amount by day_of_week and is_peak', 'ti', 415) +
  text(5, 41, 'is_peak', 'at', 41, 'start') +
  '<circle cx="58.500" cy="38.500" r="4.700" fill="#70addf"/><circle cx="120" cy="38.500" r="4.700" fill="#fdb813"/>' +
  text(65, 41, 'Off-Peak', '', 45, 'start') + text(126, 41, 'Peak', '', 26, 'start') +
  text(294, 180, 'day_of_week', 'at', 67) + vtext(14, 107, 'Sum of fare_am...', 89));
```
